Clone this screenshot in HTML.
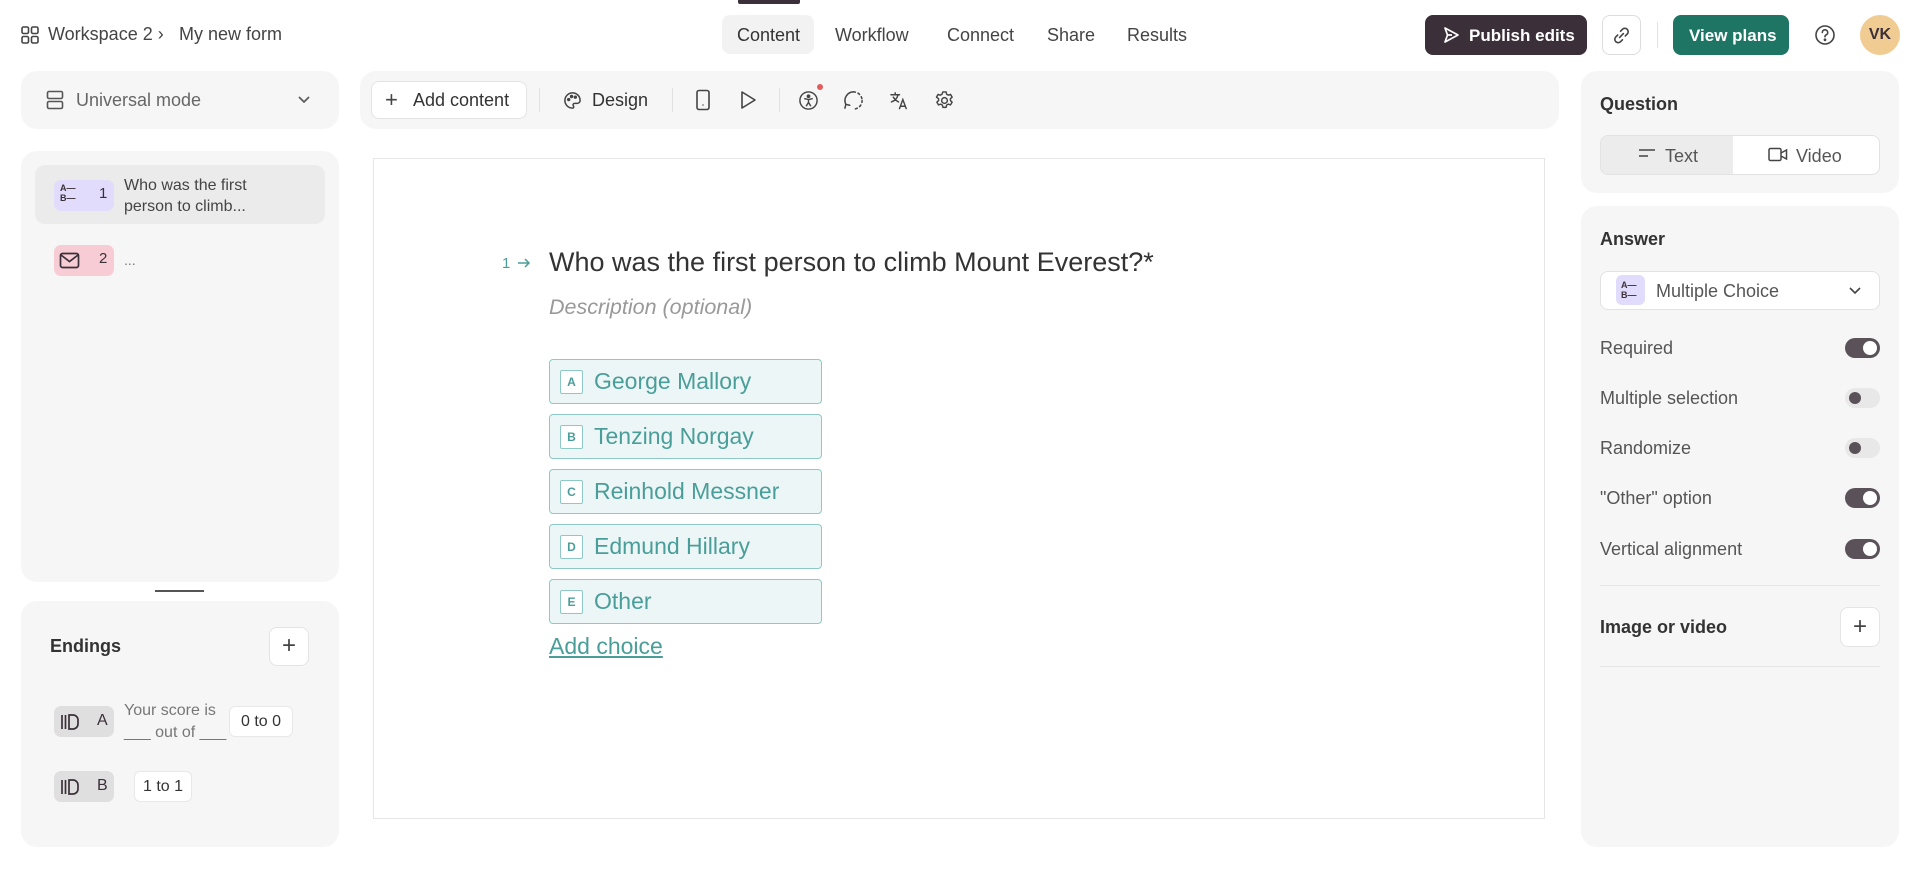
<!DOCTYPE html>
<html><head><meta charset="utf-8">
<style>
*{box-sizing:border-box;margin:0;padding:0}
body{width:1920px;height:869px;background:#fff;font-family:"Liberation Sans",sans-serif;color:#333;position:relative;overflow:hidden}
.a{position:absolute}
.panel{position:absolute;background:#f6f6f6;border-radius:16px}
.t{position:absolute;white-space:nowrap}
.sep{position:absolute;width:1px;background:#e2e2e2}
svg{position:absolute}
.tog{position:absolute;left:1845px;width:35px;height:20px;border-radius:10px}
.tog.on{background:#5a5258}
.tog.on::after{content:"";position:absolute;right:3px;top:3px;width:14px;height:14px;border-radius:50%;background:#fff}
.tog.off{background:#e8e8e8}
.tog.off::after{content:"";position:absolute;left:4px;top:4px;width:12px;height:12px;border-radius:50%;background:#5a5258}
.row{position:absolute;left:1600px;font-size:18px;color:#555}
.ch{position:absolute;left:549px;width:273px;height:45px;background:#edf6f6;border:1.5px solid #8ec9c5;border-radius:4px}
.ch .k{position:absolute;left:10px;top:10px;width:23px;height:24px;border:1px solid #8ec9c5;background:#fff;border-radius:2px;font-size:12px;font-weight:bold;color:#4a9e99;text-align:center;line-height:22px}
.ch .l{position:absolute;left:44px;top:8px;font-size:23px;color:#4a9e99;white-space:nowrap}
.badge{position:absolute;width:60px;height:31px;border-radius:7px}
</style></head><body>

<!-- top bar -->
<svg style="left:21px;top:26px" width="18" height="18" viewBox="0 0 18 18" fill="none" stroke="#444" stroke-width="1.6"><rect x="1" y="1" width="6.5" height="6.5" rx="1.5"/><rect x="10.5" y="1" width="6.5" height="6.5" rx="1.5"/><rect x="1" y="10.5" width="6.5" height="6.5" rx="1.5"/><rect x="10.5" y="10.5" width="6.5" height="6.5" rx="1.5"/></svg>
<div class="t" style="left:48px;top:24px;font-size:18px;color:#444">Workspace 2 ›</div>
<div class="t" style="left:179px;top:24px;font-size:18px;color:#444">My new form</div>

<div class="a" style="left:738px;top:0;width:62px;height:4px;background:#3b3039;border-radius:0 0 2px 2px"></div>
<div class="a" style="left:722px;top:15px;width:92px;height:39px;background:#f2f2f2;border-radius:8px"></div>
<div class="t" style="left:737px;top:25px;font-size:18px;color:#333">Content</div>
<div class="t" style="left:835px;top:25px;font-size:18px;color:#444">Workflow</div>
<div class="t" style="left:947px;top:25px;font-size:18px;color:#444">Connect</div>
<div class="t" style="left:1047px;top:25px;font-size:18px;color:#444">Share</div>
<div class="t" style="left:1127px;top:25px;font-size:18px;color:#444">Results</div>

<div class="a" style="left:1425px;top:15px;width:162px;height:40px;background:#3b3039;border-radius:8px"></div>
<svg style="left:1442px;top:26px" width="18" height="18" viewBox="0 0 18 18" fill="none" stroke="#fff" stroke-width="1.7" stroke-linejoin="round"><path d="M3 2 L16 9 L3 16 L5.5 9 Z M5.5 9 H10"/></svg>
<div class="t" style="left:1469px;top:26px;font-size:17px;font-weight:bold;color:#fff">Publish edits</div>
<div class="a" style="left:1602px;top:15px;width:39px;height:40px;border:1px solid #ddd;border-radius:8px;background:#fff"></div>
<svg style="left:1612px;top:26px" width="19" height="19" viewBox="0 0 20 20" fill="none" stroke="#444" stroke-width="1.7" stroke-linecap="round"><path d="M8 12 L12 8 M9 5.5 L11 3.5 a3.5 3.5 0 0 1 5 5 L14 10.5 M11 14.5 L9 16.5 a3.5 3.5 0 0 1 -5 -5 L6 9.5"/></svg>
<div class="sep" style="left:1657px;top:22px;height:26px"></div>
<div class="a" style="left:1673px;top:15px;width:116px;height:40px;background:#1f7563;border-radius:8px"></div>
<div class="t" style="left:1689px;top:26px;font-size:17px;font-weight:bold;color:#fff">View plans</div>
<svg style="left:1814px;top:24px" width="22" height="22" viewBox="0 0 22 22" fill="none" stroke="#444" stroke-width="1.6"><circle cx="11" cy="11" r="9"/><path d="M8.3 8.5 a2.7 2.7 0 1 1 3.7 2.5 c-0.8 0.4 -1 0.9 -1 1.8" stroke-linecap="round"/><circle cx="11" cy="15.8" r="0.6" fill="#444"/></svg>
<div class="a" style="left:1860px;top:15px;width:40px;height:40px;border-radius:50%;background:#f1cc92;font-size:16px;font-weight:bold;color:#3b3039;text-align:center;line-height:40px">VK</div>

<!-- universal mode -->
<div class="panel" style="left:21px;top:71px;width:318px;height:58px"></div>
<svg style="left:46px;top:90px" width="18" height="20" viewBox="0 0 18 20" fill="none" stroke="#555" stroke-width="1.6"><rect x="1.5" y="1.5" width="15" height="7" rx="1.5"/><rect x="1.5" y="11.5" width="15" height="7" rx="1.5"/></svg>
<div class="t" style="left:76px;top:90px;font-size:18px;color:#666">Universal mode</div>
<svg style="left:297px;top:95px" width="14" height="10" viewBox="0 0 14 10" fill="none" stroke="#555" stroke-width="1.6"><path d="M2 2 L7 7 L12 2"/></svg>

<!-- toolbar -->
<div class="panel" style="left:360px;top:71px;width:1199px;height:58px"></div>
<div class="a" style="left:371px;top:81px;width:156px;height:38px;background:#fff;border:1px solid #e4e4e4;border-radius:8px"></div>
<div class="t" style="left:385px;top:87px;font-size:22px;color:#444">+</div>
<div class="t" style="left:413px;top:90px;font-size:18px;color:#333">Add content</div>
<div class="sep" style="left:539px;top:88px;height:24px"></div>
<svg style="left:563px;top:91px" width="19" height="19" viewBox="0 0 20 20" fill="none" stroke="#444" stroke-width="1.6"><path d="M10 2 a8 8 0 1 0 0 16 c1.5 0 1.5 -1.5 0.8 -2.5 c-0.7 -1 0 -2.5 1.5 -2.5 H15 a3 3 0 0 0 3 -3 C18 5.5 14.5 2 10 2 Z"/><circle cx="6" cy="9" r="1" fill="#444"/><circle cx="9" cy="5.8" r="1" fill="#444"/><circle cx="13" cy="6.5" r="1" fill="#444"/></svg>
<div class="t" style="left:592px;top:90px;font-size:18px;color:#333">Design</div>
<div class="sep" style="left:672px;top:88px;height:24px"></div>
<svg style="left:695px;top:89px" width="16" height="22" viewBox="0 0 16 22" fill="none" stroke="#444" stroke-width="1.6"><rect x="2" y="1.5" width="12" height="19" rx="2"/><path d="M8 15.5 v1"/></svg>
<svg style="left:739px;top:90px" width="18" height="20" viewBox="0 0 18 20" fill="none" stroke="#444" stroke-width="1.6" stroke-linejoin="round"><path d="M3 2 L16 10 L3 18 Z"/></svg>
<div class="sep" style="left:779px;top:88px;height:24px"></div>
<svg style="left:798px;top:90px" width="21" height="21" viewBox="0 0 22 22" fill="none" stroke="#444" stroke-width="1.5"><circle cx="11" cy="11" r="9"/><circle cx="11" cy="6.5" r="1.2" fill="#444"/><path d="M6.5 9 L11 10 L15.5 9 M11 10 V13 L8.5 17 M11 13 L13.5 17"/></svg>
<div class="a" style="left:817px;top:84px;width:6px;height:6px;border-radius:50%;background:#e35b5b"></div>
<svg style="left:843px;top:90px" width="21" height="21" viewBox="0 0 22 22" fill="none" stroke="#444" stroke-width="1.6" stroke-linecap="round"><path d="M11 2 a9 9 0 0 1 9 9" stroke-dasharray="2 3"/><path d="M20 11 a9 9 0 0 1 -9 9" stroke-dasharray="2 3"/><path d="M11 2 a9 9 0 0 0 -8 13 M3 15 L2 19 M3 15 L7 16"/></svg>
<svg style="left:889px;top:90px" width="21" height="21" viewBox="0 0 22 22" fill="none" stroke="#444" stroke-width="1.5" stroke-linecap="round"><path d="M2 5 H11 M6.5 3 V5 M9.5 5 C8.5 9 5.5 11.5 2.5 12.5 M4.5 7.5 C6 10 8 11.5 10 12.5 M11 19.5 L14.5 10 L18 19.5 M12 17 H17"/></svg>
<svg style="left:934px;top:90px" width="21" height="21" viewBox="0 0 22 22" fill="none" stroke="#444" stroke-width="1.5"><circle cx="11" cy="11" r="3"/><path d="M9.3 2 h3.4 l0.5 2.4 1.8 1 2.3-.8 1.7 2.9 -1.8 1.6 v2 l1.8 1.6 -1.7 2.9 -2.3 -.8 -1.8 1 -.5 2.4 h-3.4 l-.5 -2.4 -1.8 -1 -2.3 .8 -1.7 -2.9 1.8 -1.6 v-2 L2.6 7.5 4.3 4.6 6.6 5.4 8.4 4.4 Z" stroke-linejoin="round"/></svg>

<!-- left list -->
<div class="panel" style="left:21px;top:151px;width:318px;height:431px"></div>
<div class="a" style="left:35px;top:165px;width:290px;height:59px;background:#ebebeb;border-radius:10px"></div>
<div class="badge" style="left:54px;top:180px;background:#e1dcfb"></div>
<div class="t" style="left:60px;top:183px;font-size:9px;font-weight:bold;line-height:10px;color:#3b3039">A—<br>B—</div>
<div class="t" style="left:99px;top:185px;font-size:15px;color:#3b3039">1</div>
<div class="t" style="left:124px;top:175px;font-size:16px;line-height:21px;color:#444">Who was the first<br>person to climb...</div>
<div class="badge" style="left:54px;top:245px;background:#f7ccd5"></div>
<svg style="left:59px;top:252px" width="21" height="17" viewBox="0 0 21 17" fill="none" stroke="#3b3039" stroke-width="1.7"><rect x="1.5" y="1.5" width="18" height="14" rx="2"/><path d="M2 3 L10.5 9.5 L19 3"/></svg>
<div class="t" style="left:99px;top:250px;font-size:15px;color:#3b3039">2</div>
<div class="t" style="left:124px;top:252px;font-size:14px;color:#777">...</div>

<div class="a" style="left:155px;top:590px;width:49px;height:2px;background:#555"></div>

<!-- endings -->
<div class="panel" style="left:21px;top:601px;width:318px;height:246px"></div>
<div class="t" style="left:50px;top:636px;font-size:18px;font-weight:bold;color:#333">Endings</div>
<div class="a" style="left:269px;top:627px;width:40px;height:39px;background:#fff;border:1px solid #e4e4e4;border-radius:8px;text-align:center;font-size:24px;line-height:36px;color:#444">+</div>
<div class="badge" style="left:54px;top:706px;background:#e0dfe0"></div>
<svg style="left:60px;top:713px" width="20" height="18" viewBox="0 0 20 18" fill="none" stroke="#3b3039" stroke-width="1.7"><path d="M2 2 V16 M5.5 2 V16"/><path d="M9 2 H13 a5 5 0 0 1 5 5 V11 a5 5 0 0 1 -5 5 H9 Z"/></svg>
<div class="t" style="left:97px;top:712px;font-size:16px;color:#3b3039">A</div>
<div class="t" style="left:124px;top:700px;font-size:16px;line-height:22px;color:#777">Your score is<br>___ out of ___</div>
<div class="a" style="left:229px;top:706px;width:64px;height:31px;background:#fff;border:1px solid #e8e8e8;border-radius:6px;text-align:center;font-size:16px;line-height:29px;color:#333">0 to 0</div>
<div class="badge" style="left:54px;top:771px;background:#e0dfe0"></div>
<svg style="left:60px;top:778px" width="20" height="18" viewBox="0 0 20 18" fill="none" stroke="#3b3039" stroke-width="1.7"><path d="M2 2 V16 M5.5 2 V16"/><path d="M9 2 H13 a5 5 0 0 1 5 5 V11 a5 5 0 0 1 -5 5 H9 Z"/></svg>
<div class="t" style="left:97px;top:777px;font-size:16px;color:#3b3039">B</div>
<div class="a" style="left:134px;top:771px;width:58px;height:31px;background:#fff;border:1px solid #e8e8e8;border-radius:6px;text-align:center;font-size:16px;line-height:29px;color:#333">1 to 1</div>

<!-- canvas -->
<div class="a" style="left:373px;top:158px;width:1172px;height:661px;border:1.5px solid #e6e6e6;background:#fff"></div>
<div class="t" style="left:502px;top:255px;font-size:15px;color:#4a9e99">1</div>
<svg style="left:516px;top:255px" width="16" height="16" viewBox="0 0 16 16" fill="none" stroke="#4a9e99" stroke-width="1.5"><path d="M2 8 H13 M9 4 L13 8 L9 12"/></svg>
<div class="t" style="left:549px;top:247px;font-size:27px;color:#333">Who was the first person to climb Mount Everest?*</div>
<div class="t" style="left:549px;top:295px;font-size:21.5px;font-style:italic;color:#999">Description (optional)</div>
<div class="ch" style="top:359px"><div class="k">A</div><div class="l">George Mallory</div></div>
<div class="ch" style="top:414px"><div class="k">B</div><div class="l">Tenzing Norgay</div></div>
<div class="ch" style="top:469px"><div class="k">C</div><div class="l">Reinhold Messner</div></div>
<div class="ch" style="top:524px"><div class="k">D</div><div class="l">Edmund Hillary</div></div>
<div class="ch" style="top:579px"><div class="k">E</div><div class="l">Other</div></div>
<div class="t" style="left:549px;top:633px;font-size:23px;color:#4a9e99;text-decoration:underline">Add choice</div>

<!-- right: question -->
<div class="panel" style="left:1581px;top:71px;width:318px;height:122px"></div>
<div class="t" style="left:1600px;top:94px;font-size:18px;font-weight:bold;color:#333">Question</div>
<div class="a" style="left:1600px;top:135px;width:280px;height:40px;background:#fff;border:1px solid #e2e2e2;border-radius:8px;overflow:hidden"><div style="width:132px;height:100%;background:#ececec"></div></div>
<svg style="left:1638px;top:148px" width="18" height="10" viewBox="0 0 18 10" stroke="#444" stroke-width="1.6"><path d="M1 2 H17 M1 8 H10"/></svg>
<div class="t" style="left:1665px;top:146px;font-size:18px;color:#555">Text</div>
<svg style="left:1768px;top:147px" width="20" height="15" viewBox="0 0 20 15" fill="none" stroke="#444" stroke-width="1.5"><rect x="1" y="1.5" width="12" height="12" rx="1.5"/><path d="M13 6 L18.5 3 V12 L13 9"/></svg>
<div class="t" style="left:1796px;top:146px;font-size:18px;color:#555">Video</div>

<!-- right: answer -->
<div class="panel" style="left:1581px;top:206px;width:318px;height:641px"></div>
<div class="t" style="left:1600px;top:229px;font-size:18px;font-weight:bold;color:#333">Answer</div>
<div class="a" style="left:1600px;top:271px;width:280px;height:39px;background:#fff;border:1px solid #e2e2e2;border-radius:8px"></div>
<div class="a" style="left:1616px;top:275px;width:29px;height:30px;background:#e1dcfb;border-radius:6px"></div>
<div class="t" style="left:1621px;top:280px;font-size:9px;font-weight:bold;line-height:10px;color:#3b3039">A—<br>B—</div>
<div class="t" style="left:1656px;top:281px;font-size:18px;color:#555">Multiple Choice</div>
<svg style="left:1848px;top:286px" width="14" height="10" viewBox="0 0 14 10" fill="none" stroke="#444" stroke-width="1.6"><path d="M2 2 L7 7 L12 2"/></svg>

<div class="row" style="top:338px">Required</div><div class="tog on" style="top:338px"></div>
<div class="row" style="top:388px">Multiple selection</div><div class="tog off" style="top:388px"></div>
<div class="row" style="top:438px">Randomize</div><div class="tog off" style="top:438px"></div>
<div class="row" style="top:488px">"Other" option</div><div class="tog on" style="top:488px"></div>
<div class="row" style="top:539px">Vertical alignment</div><div class="tog on" style="top:539px"></div>
<div class="a" style="left:1600px;top:585px;width:280px;height:1px;background:#e6e6e6"></div>
<div class="t" style="left:1600px;top:617px;font-size:18px;font-weight:bold;color:#333">Image or video</div>
<div class="a" style="left:1840px;top:607px;width:40px;height:40px;background:#fff;border:1px solid #e4e4e4;border-radius:8px;text-align:center;font-size:24px;line-height:37px;color:#444">+</div>
<div class="a" style="left:1600px;top:666px;width:280px;height:1px;background:#e6e6e6"></div>
</body></html>
